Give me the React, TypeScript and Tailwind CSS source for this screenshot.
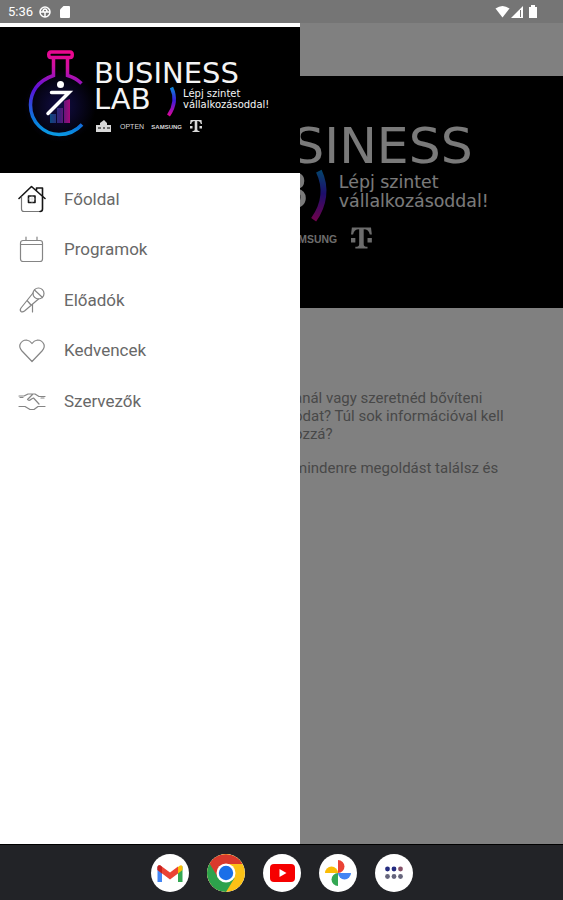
import type { ReactNode } from "react";

type LogoProps = { viewBox: string; id: string; className: string; alignEnd?: boolean };

function Logo({ viewBox, id, className, alignEnd }: LogoProps) {
  return (
    <svg viewBox={viewBox} className={className} role="img" aria-label="Business Lab">
      <defs>
        <linearGradient id={`${id}-flask`} gradientUnits="userSpaceOnUse" x1="66" y1="50" x2="50" y2="136">
          <stop offset="0" stopColor="#f0058c" />
          <stop offset="0.2" stopColor="#d010a0" />
          <stop offset="0.5" stopColor="#5a12d8" />
          <stop offset="0.85" stopColor="#0a78dc" />
          <stop offset="1" stopColor="#0aa0e6" />
        </linearGradient>
        <linearGradient id={`${id}-arc`} gradientUnits="userSpaceOnUse" x1="172" y1="87" x2="169" y2="116">
          <stop offset="0" stopColor="#0a8ad8" />
          <stop offset="0.45" stopColor="#3a1cd8" />
          <stop offset="1" stopColor="#e00598" />
        </linearGradient>
        <linearGradient id={`${id}-bars`} gradientUnits="userSpaceOnUse" x1="50" y1="0" x2="70" y2="0">
          <stop offset="0" stopColor="#0a4a80" />
          <stop offset="0.5" stopColor="#3a2078" />
          <stop offset="1" stopColor="#a8087c" />
        </linearGradient>
        <radialGradient id={`${id}-glow`}>
          <stop offset="0" stopColor="#161058" stopOpacity="0.8" />
          <stop offset="1" stopColor="#161058" stopOpacity="0" />
        </radialGradient>
      </defs>
      <circle cx="60" cy="106" r="36" fill={`url(#${id}-glow)`} />
      <path d="M50 123v-9h6v9zM57 123v-15h6v15zM64 123v-22l6-2v24z" fill={`url(#${id}-bars)`} />
      <path
        d="M53.500 58V75.500C37 81 30.500 93 30.500 105C30.500 122 44 134.500 59 134.500C69 134.500 77 130 82 124.500M67.500 58V75.500C73 77 78 80 81.500 83.500M51 52H70C73 52 73 57.500 70 57.500H51C48 57.500 48 52 51 52Z"
        fill="none"
        stroke={`url(#${id}-flask)`}
        strokeWidth="3.500"
      />
      <circle cx="60.500" cy="84.500" r="3.500" fill="#fff" />
      <path d="M51.500 92.500H69L48 113.500" fill="none" stroke="#fff" strokeWidth="3.500" strokeLinecap="round" />
      <g fill="#f4f4f4" fontFamily="'DejaVu Sans', sans-serif">
        <text fontSize="29" textAnchor={alignEnd ? "end" : "start"}>
          <tspan x={alignEnd ? 260 : 94} y="83">BUSINESS</tspan>
          <tspan x={alignEnd ? 166 : 94} y="109">LAB</tspan>
        </text>
        <text fontSize="10">
          <tspan x="183" y="97">Lépj szintet</tspan>
          <tspan x="183" y="108">vállalkozásoddal!</tspan>
        </text>
      </g>
      <path d="M171.500 87.500C176 97 174.500 107 168.500 115.500" fill="none" stroke={`url(#${id}-arc)`} strokeWidth="3.500" />
      <g fill="#d8d8d8">
        <path d="M96 125h4v-2l4-3 3 3v2h4v7H96z" />
        <path d="M98 128h3M103 128h2M107 128h3" stroke="#000" />
        <text x="120" y="129" fontSize="7" fontFamily="'Liberation Sans', sans-serif">OPTEN</text>
        <text x="182" y="129" fontSize="6" fontWeight="700" textAnchor="end" fontFamily="'Liberation Sans', sans-serif">SAMSUNG</text>
        <path d="M190.500 120H201.500L202 124H200.800Q200.300 121 197.300 121V129.500Q197.300 131 199.500 131V132H192.500V131Q194.700 131 194.700 129.500V121Q191.700 121 191.200 124H190zM190 126h2.500v2.500H190zM199.500 126h2.500v2.500h-2.500z" />
      </g>
    </svg>
  );
}

function MenuIcon({ dark, children }: { dark?: boolean; children: ReactNode }) {
  return (
    <svg
      viewBox="0 0 28 28"
      className={dark ? "size-7 text-[#161616]" : "size-7 text-[#858585]"}
      fill="none"
      stroke="currentColor"
      strokeWidth="1.200"
      strokeLinecap="round"
      strokeLinejoin="round"
      aria-hidden="true"
    >
      {children}
    </svg>
  );
}

const menu: { label: string; icon: ReactNode }[] = [
  {
    label: "Főoldal",
    icon: (
      <MenuIcon dark>
        <path d="M1 13.500L13.500 1.500L27 13.500" strokeWidth="1.600" />
        <path d="M18.500 5V3H24.500V11" strokeWidth="1.600" />
        <path d="M3.500 12V24Q3.500 26.500 6 26.500H22" stroke="#777" />
        <path d="M24.500 12V24Q24.500 26.500 22 26.500" strokeWidth="1.600" />
        <path d="M10.500 11h6.500v6.500h-6.500z" strokeWidth="1.600" />
        <path d="M14 11v6.500M10.500 14h6.500" strokeWidth="0.600" stroke="#ccc" />
      </MenuIcon>
    ),
  },
  {
    label: "Programok",
    icon: (
      <MenuIcon>
        <rect x="2.500" y="4.500" width="22" height="21" rx="2.500" />
        <path d="M2.500 8.500h22M8 1v3.500M19 1v3.500" />
      </MenuIcon>
    ),
  },
  {
    label: "Előadók",
    icon: (
      <MenuIcon>
        <circle cx="20.500" cy="7.500" r="5.500" />
        <path d="M16.500 4L24.500 11.500M15 7L3 22Q1.500 24 3 25.500Q4.500 26.500 6.500 25L20.500 13M14.500 18.500V26M9.500 15L13 19" />
      </MenuIcon>
    ),
  },
  {
    label: "Kedvencek",
    icon: (
      <MenuIcon>
        <path d="M14 24.500L4 14Q1 10.500 2 7.500Q4 3 8.500 3Q12 3.500 14 6.500Q16 3.500 19.500 3Q24 3 26 7.500Q27 10.500 24 14Z" />
      </MenuIcon>
    ),
  },
  {
    label: "Szervezők",
    icon: (
      <MenuIcon>
        <path d="M1 8H6L10 6H17L21 8.500H27M1 18.500H7L12 21.500H16L20 18.500H27M14.500 6.500L9.500 11.500Q11 13.500 13.500 11L15.500 10L21 16M2 9.500H5M23 10H26" />
      </MenuIcon>
    ),
  },
];

const apps: { label: string; icon: ReactNode }[] = [
  {
    label: "Gmail",
    icon: (
      <>
        <path d="M6.500 12V28H11V17z" fill="#4285f4" />
        <path d="M31.500 12V28H27V17z" fill="#34a853" />
        <path d="M27 13L29 11.500Q31.500 10.500 31.500 13.500V16L27 19.500z" fill="#fbbc04" />
        <path d="M6.500 16V13.500Q6.500 10.500 9.500 11.500L19 18.500L27 12.500V19.500L19 25.500z" fill="#ea4335" />
        <path d="M6.500 16V13.500Q6.500 10.500 9.500 11.500L11 13V19.500z" fill="#c5221f" />
      </>
    ),
  },
  {
    label: "Chrome",
    icon: (
      <>
        <circle cx="19" cy="19" r="19" fill="#fbc116" />
        <path d="M19 19L2.500 9.500A19 19 0 0 0 19 38L27.500 24z" fill="#2da24c" />
        <path d="M2.500 9.500A19 19 0 0 1 35.500 10H19L11 23.500z" fill="#da3a2d" />
        <circle cx="19" cy="19" r="9.500" fill="#fff" />
        <circle cx="19" cy="19" r="7.200" fill="#1a6fe8" />
      </>
    ),
  },
  {
    label: "YouTube",
    icon: (
      <>
        <rect x="7" y="10" width="25" height="18" rx="4" fill="#f60000" />
        <path d="M16.500 15L23.500 19L16.500 23z" fill="#fff" />
      </>
    ),
  },
  {
    label: "Google Photos",
    icon: (
      <>
        <path d="M19 6A6.500 6.500 0 0 1 19 19z" fill="#ea4335" />
        <path d="M32 19A6.500 6.500 0 0 1 19 19z" fill="#4285f4" />
        <path d="M19 32A6.500 6.500 0 0 1 19 19z" fill="#34a853" />
        <path d="M6 19A6.500 6.500 0 0 1 19 19z" fill="#fbbc04" />
      </>
    ),
  },
  {
    label: "All apps",
    icon: (
      <>
        <g fill="#252c80">
          <circle cx="12.500" cy="15" r="2.400" />
          <circle cx="19" cy="15" r="2.400" />
        </g>
        <circle cx="25.500" cy="15" r="2.400" fill="#865269" />
        <g fill="#65657c">
          <circle cx="12.500" cy="22.500" r="2.400" />
          <circle cx="19" cy="22.500" r="2.400" />
          <circle cx="25.500" cy="22.500" r="2.400" />
        </g>
      </>
    ),
  },
];

function StatusBar() {
  return (
    <header className="flex h-[23px] shrink-0 items-center justify-between bg-[#757575] pr-6 pl-2 text-white">
      <div className="flex items-center gap-1.5">
        <span className="text-[13px]">5:36</span>
        <svg viewBox="0 0 12 12" className="size-3" fill="none" stroke="currentColor" strokeWidth="1.500" aria-hidden="true">
          <circle cx="6" cy="6" r="5" />
          <path d="M1 6h10M4 6q0-3 2-3t2 3M6 6v5" />
        </svg>
        <svg viewBox="0 0 12 12" className="ml-0.5 size-3" fill="currentColor" aria-hidden="true">
          <path d="M4.500 0H10q1 0 1 1v10q0 1-1 1H2q-1 0-1-1V3.500z" />
        </svg>
      </div>
      <svg viewBox="0 0 44 14" className="h-3.5 w-11" fill="currentColor" aria-hidden="true">
        <path d="M0.500 3.500Q7.500 -1.500 14.500 3.500L7.500 12.500z" />
        <path d="M28 1V13H16z" />
        <path d="M25.500 5v7" stroke="#757575" />
        <path d="M34 2h2V0h4v2h2V13h-8z" />
      </svg>
    </header>
  );
}

export default function App() {
  return (
    <div className="flex h-screen flex-col overflow-hidden bg-[#808080] font-['Roboto',sans-serif]">
      <StatusBar />
      <div className="relative min-h-0 flex-1 overflow-hidden">
        <main className="pt-[53px]">
          <div className="bg-black">
            <Logo id="hero" alignEnd viewBox="-12 33 324 133" className="h-[232px] w-full opacity-50" />
          </div>
          <div className="pt-[81px] pl-[294px] text-[15px] leading-[18px] whitespace-nowrap text-[#484848]">
            <p>
              anál vagy szeretnéd bővíteni
              <br />
              ódat? Túl sok információval kell
              <br />
              ozzá?
            </p>
            <p className="mt-4">mindenre megoldást találsz és</p>
          </div>
        </main>
        <aside className="absolute inset-y-0 left-0 w-[300px] bg-white pt-1">
          <div className="bg-black">
            <Logo id="drawer" viewBox="0 27 300 146" className="h-[146px] w-full" />
          </div>
          <nav className="flex h-[254px] flex-col pt-px">
            {menu.map((item) => (
              <a key={item.label} href="#" className="flex flex-1 items-center gap-[18px] pl-[18px] text-[17px] text-[#686868]">
                {item.icon}
                {item.label}
              </a>
            ))}
          </nav>
        </aside>
      </div>
      <footer className="flex h-14 shrink-0 items-center justify-center gap-[18px] border-t border-black bg-[#222327]">
        {apps.map((app) => (
          <button key={app.label} type="button" aria-label={app.label} className="size-[38px] overflow-hidden rounded-full bg-white">
            <svg viewBox="0 0 38 38" className="size-full" aria-hidden="true">
              {app.icon}
            </svg>
          </button>
        ))}
      </footer>
    </div>
  );
}
